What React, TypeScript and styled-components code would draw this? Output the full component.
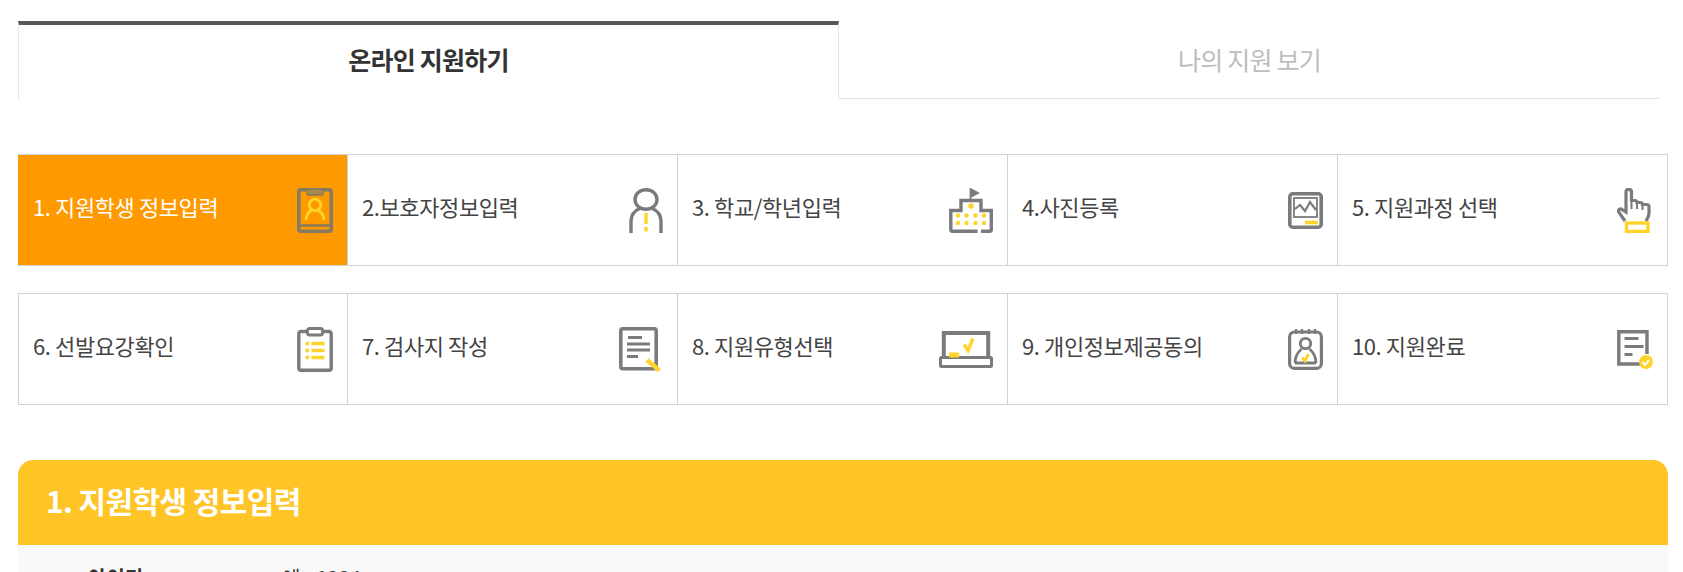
import React from 'react';
import styled, { createGlobalStyle } from 'styled-components';

const GlobalStyle = createGlobalStyle`
  html, body {
    margin: 0;
    padding: 0;
    height: 572px;
    overflow: hidden;
    background: #fff;
    font-family: "Noto Sans CJK KR", "Noto Sans", sans-serif;
  }
`;

const GRAY = '#7b7b7d';
const YELLOW = '#ffd42a';

const IdCardIcon = () => (
  <svg width="36" height="45" viewBox="0 0 36 45" fill="none">
    <rect x="1.800" y="1.800" width="32.400" height="41.400" rx="2" stroke="#857a62" strokeWidth="3.600" />
    <rect x="10" y="1" width="16" height="6" rx="1" fill="#a98a4a" stroke="#857a62" strokeWidth="1.500" />
    <path d="M3 37.500h30" stroke="#857a62" strokeWidth="2.500" />
    <circle cx="18" cy="17" r="5.800" stroke={YELLOW} strokeWidth="2.800" />
    <path d="M9 32c.5-5.500 3-8.500 6-10M27 32c-.5-5.500-3-8.500-6-10" stroke={YELLOW} strokeWidth="2.800" />
  </svg>
);

const PersonIcon = () => (
  <svg width="34" height="45" viewBox="0 0 34 45" fill="none">
    <ellipse cx="17" cy="11.500" rx="11" ry="9.800" stroke={GRAY} strokeWidth="3.400" />
    <path d="M2 45V33c0-6.500 4-10.500 9.500-13M32 45V33c0-6.500-4-10.500-9.500-13" stroke={GRAY} strokeWidth="3.400" />
    <path d="M17 25v11M17 39v4.500" stroke={YELLOW} strokeWidth="3.400" />
  </svg>
);

const SchoolIcon = () => (
  <svg width="44" height="45" viewBox="0 0 44 45" fill="none">
    <path d="M21.500 12V1l7.500 4-7.500 4" fill={GRAY} stroke={GRAY} strokeWidth="1.800" />
    <path d="M32 43.200H40.500a1.800 1.800 0 0 0 1.800-1.800V22.500H32V12.500H12V22.500H1.800V41.400A1.800 1.800 0 0 0 3.600 43.200H28.500" stroke={GRAY} strokeWidth="3.400" />
    <circle cx="22" cy="18" r="2.800" fill={YELLOW} />
    {[27.500, 35].map(y =>
      [9, 17.500, 26.500, 35].map(x => <circle key={`${x}-${y}`} cx={x} cy={y} r="2.200" fill={YELLOW} />)
    )}
  </svg>
);

const PhotoIcon = () => (
  <svg width="35" height="37" viewBox="0 0 35 37" fill="none">
    <rect x="1.800" y="1.800" width="31.400" height="33.400" rx="3" stroke={GRAY} strokeWidth="3.600" />
    <rect x="6" y="6" width="23" height="19" stroke={GRAY} strokeWidth="1.800" />
    <path d="M7 17l5-4 5 6 5-9 6 8" stroke={GRAY} strokeWidth="2.200" />
    <path d="M17 30.500h13" stroke={YELLOW} strokeWidth="3.600" />
  </svg>
);

const HandIcon = () => (
  <svg width="36" height="45" viewBox="0 0 36 45" fill="none">
    <path d="M8 33 2 24.500c-1.500-2.500 1-4.500 3-3L9 24V4c0-3.500 5.500-3.500 5.500 0v10c0-2 5.500-2 5.500 0v2c0-2 5.500-2 5.500 0v2c0-2 6.500-2 6.500 0v7c0 4-2 6-3 8" stroke={GRAY} strokeWidth="3.200" />
    <path d="M14.500 14v7M20 16v5M25.500 18v4" stroke={GRAY} strokeWidth="2" />
    <rect x="9.500" y="35" width="21.500" height="8.500" stroke={YELLOW} strokeWidth="3.400" />
  </svg>
);

const ClipboardIcon = () => (
  <svg width="36" height="45" viewBox="0 0 36 45" fill="none">
    <path d="M10 4.500H3.800a2 2 0 0 0-2 2V41.200a2 2 0 0 0 2 2H32.200a2 2 0 0 0 2-2V6.500a2 2 0 0 0-2-2H26" stroke={GRAY} strokeWidth="3.400" />
    <rect x="10.500" y="1.500" width="15" height="6.500" rx="2" stroke={GRAY} strokeWidth="2.800" />
    {[16.500, 23.500, 30.500].map(y => (
      <path key={y} d={`M8.500 ${y}h3.500M14.500 ${y}h13`} stroke={YELLOW} strokeWidth="3.400" />
    ))}
  </svg>
);

const ExamIcon = () => (
  <svg width="44" height="45" viewBox="0 0 44 45" fill="none">
    <rect x="1.800" y="1.800" width="35.400" height="40" rx="2" stroke={GRAY} strokeWidth="3.600" />
    <path d="M9 10.500h14M8 17h23M8 23h23M8 29.500h11" stroke={GRAY} strokeWidth="3" />
    <path d="M28 33l12.500 10.500" stroke={YELLOW} strokeWidth="4.400" />
  </svg>
);

const LaptopIcon = () => (
  <svg width="54" height="37" viewBox="0 0 54 37" fill="none">
    <path d="M4.800 27V2H49.200V27" stroke={GRAY} strokeWidth="4" />
    <rect x="1.500" y="26.500" width="51" height="9" rx="1" stroke={GRAY} strokeWidth="3" />
    <path d="M11 25.500v-3h8v3z" fill={YELLOW} stroke={YELLOW} strokeWidth="2" />
    <path d="M25 13.500l4 6 5-12" stroke={YELLOW} strokeWidth="3.400" />
  </svg>
);

const AgreeIcon = () => (
  <svg width="35" height="42" viewBox="0 0 35 42" fill="none">
    <rect x="1.600" y="4" width="31.800" height="36.400" rx="5" stroke={GRAY} strokeWidth="3.200" />
    <path d="M8 1v5M14 1v5M21 1v5M27 1v5" stroke={GRAY} strokeWidth="2.200" />
    <circle cx="17.500" cy="15.500" r="5.200" stroke={GRAY} strokeWidth="2.800" />
    <path d="M7 35c0-6.500 3-11 6.500-14M28 35c0-6.500-3-11-6.500-14M7 35h21" stroke={GRAY} strokeWidth="2.800" />
    <path d="M14 29.500l3 3.500 3.500-7" stroke={YELLOW} strokeWidth="2.800" />
  </svg>
);

const DoneIcon = () => (
  <svg width="36" height="39" viewBox="0 0 36 39" fill="none">
    <path d="M24 34H1.800V1.800H30V24" stroke={GRAY} strokeWidth="3.400" />
    <path d="M7.500 8.500h14M7.500 16.500h19M7.500 24.500h8" stroke={GRAY} strokeWidth="3" />
    <circle cx="29" cy="32" r="7" fill={YELLOW} />
    <path d="M25.500 32l2.500 3 4-5" stroke="#fff" strokeWidth="2" />
  </svg>
);

const stepRows = [
  [
    { label: '1. 지원학생 정보입력', icon: <IdCardIcon />, active: true },
    { label: '2.보호자정보입력', icon: <PersonIcon /> },
    { label: '3. 학교/학년입력', icon: <SchoolIcon /> },
    { label: '4.사진등록', icon: <PhotoIcon /> },
    { label: '5. 지원과정 선택', icon: <HandIcon /> },
  ],
  [
    { label: '6. 선발요강확인', icon: <ClipboardIcon /> },
    { label: '7. 검사지 작성', icon: <ExamIcon /> },
    { label: '8. 지원유형선택', icon: <LaptopIcon /> },
    { label: '9. 개인정보제공동의', icon: <AgreeIcon /> },
    { label: '10. 지원완료', icon: <DoneIcon /> },
  ],
];

export default function App() {
  return (
    <>
      <GlobalStyle />
      <Page>
        <Tabs>
          <Tab $active>온라인 지원하기</Tab>
          <Tab>나의 지원 보기</Tab>
        </Tabs>
        <StepRows>
          {stepRows.map((row, i) => (
            <StepRow key={i}>
              {row.map(step => (
                <Step key={step.label} $active={step.active}>
                  <StepLabel>{step.label}</StepLabel>
                  {step.icon}
                </Step>
              ))}
            </StepRow>
          ))}
        </StepRows>
        <PanelTitle>1. 지원학생 정보입력</PanelTitle>
        <FormRow>
          <FormLabel>아이디</FormLabel>
          <FormValue>예: 1234</FormValue>
        </FormRow>
      </Page>
    </>
  );
}

const Page = styled.div`
  width: 1650px;
  margin-left: 18px;
  padding-top: 21px;
`;

const Tabs = styled.div`
  display: flex;
  width: 1642px;
`;

const Tab = styled.div<{ $active?: boolean }>`
  box-sizing: border-box;
  height: 78px;
  display: flex;
  align-items: center;
  justify-content: center;
  font-size: 25px;
  letter-spacing: -0.8px;
  ${p => p.$active ? `
    width: 821px;
    border-top: 4px solid #58585a;
    border-left: 1px solid #e4e4e4;
    border-right: 1px solid #e4e4e4;
    color: #333;
    font-weight: 700;
    padding-bottom: 6px;
  ` : `
    flex: 1;
    border-bottom: 1px solid #e4e4e4;
    color: #bdbdbd;
    font-weight: 400;
    padding-bottom: 2px;
  `}
`;

const StepRows = styled.div`
  display: flex;
  flex-direction: column;
  gap: 27px;
  margin-top: 55px;
`;

const StepRow = styled.div`
  display: grid;
  grid-template-columns: 328px repeat(4, 330px);
  height: 112px;
  box-sizing: border-box;
  border: 1px solid #d2d2d2;
`;

const Step = styled.div<{ $active?: boolean }>`
  display: flex;
  align-items: center;
  justify-content: space-between;
  box-sizing: border-box;
  padding: 0 14px 0 14px;
  background: ${p => (p.$active ? '#ff9900' : '#fff')};
  color: ${p => (p.$active ? '#fff' : '#444')};
  ${p => p.$active && 'box-shadow: -1px 0 0 #ff9900;'}
  & + & {
    border-left: 1px solid #d2d2d2;
  }
`;

const StepLabel = styled.span`
  font-size: 22px;
  line-height: 30px;
  letter-spacing: -0.4px;
  padding-bottom: 8px;
`;

const PanelTitle = styled.h2`
  box-sizing: border-box;
  height: 85px;
  margin: 55px 0 0;
  padding: 0 0 6px 28px;
  display: flex;
  align-items: center;
  background: #ffc425;
  border-radius: 15px 15px 0 0;
  color: #fff;
  font-size: 30px;
  font-weight: 700;
  letter-spacing: -0.6px;
`;

const FormRow = styled.div`
  display: flex;
  height: 60px;
  background: #f9f9f9;
  padding: 18px 0 0 70px;
  font-size: 20px;
`;

const FormLabel = styled.span`
  width: 194px;
  font-weight: 700;
  color: #333;
`;

const FormValue = styled.span`
  color: #333;
  word-spacing: 6px;
`;
